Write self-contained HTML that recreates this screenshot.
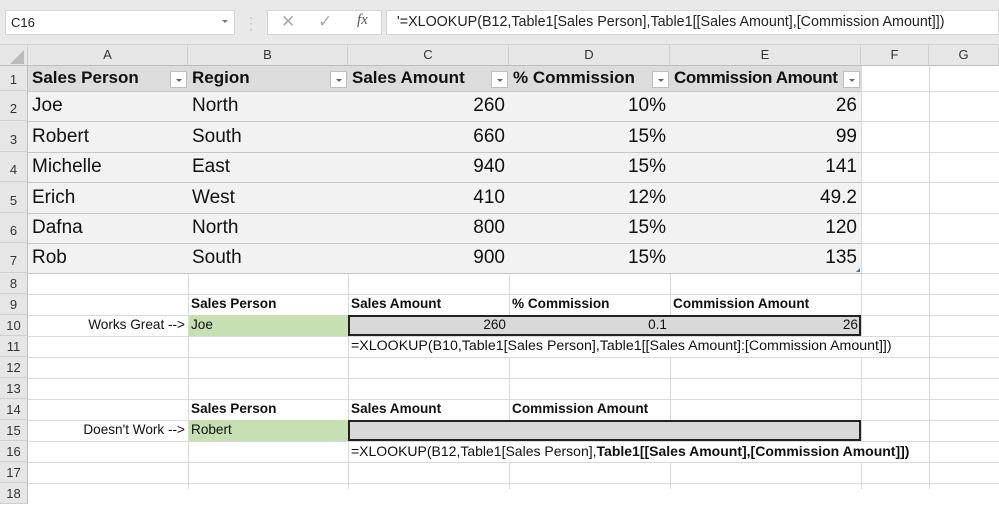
<!DOCTYPE html>
<html><head><meta charset="utf-8"><style>
*{margin:0;padding:0;box-sizing:border-box}
body{width:999px;height:489px;overflow:hidden;background:#fff;font-family:"Liberation Sans",sans-serif;position:relative}
.a{position:absolute;white-space:nowrap;overflow:visible}
.top{left:0;top:0;width:999px;height:45px;background:#e9e9e9;border-bottom:1px solid #d0d0d0}
.box{background:#fff;border:1px solid #d4d4d4}
.ch{top:45px;height:21px;background:#e6e6e6;border-right:1px solid #cfcfcf;border-bottom:1px solid #bdbdbd;font-size:13px;color:#333;text-align:center;line-height:20px}
.rh{left:0;width:28px;background:#e6e6e6;border-right:1px solid #bdbdbd;border-bottom:1px solid #cfcfcf;font-size:13px;color:#333;text-align:center}
.vl{top:66px;width:1px;height:423px;background:#dadada}
.hl{left:28px;width:971px;height:1px;background:#dadada}
.t{font-size:19px;color:#111;padding:0 4px}
.s{font-size:13.6px;color:#111;padding:0 3px}
.b{font-weight:bold}
.r{text-align:right}
.dd{position:absolute;width:17px;height:17px;background:#fff;border:1px solid #bdbdbd;top:5px}
.dd:after{content:"";position:absolute;left:5px;top:7px;border-left:3px solid transparent;border-right:3px solid transparent;border-top:3px solid #666}
</style></head><body>
<div class="a top"></div>
<div class="a box" style="left:5px;top:10px;width:230px;height:25px;font-size:13px;line-height:23px;padding-left:5px;color:#222">C16</div>
<div class="a" style="left:222px;top:20px;border-left:3px solid transparent;border-right:3px solid transparent;border-top:3px solid #777"></div>
<div class="a" style="left:249px;top:14px;color:#aaa;font-size:12px;line-height:6px">·<br>·<br>·</div>
<div class="a box" style="left:267px;top:10px;width:115px;height:25px"></div>
<div class="a" style="left:281px;top:12px;font-size:17px;color:#aaa">✕</div>
<div class="a" style="left:318px;top:12px;font-size:17px;color:#aaa">✓</div>
<div class="a" style="left:357px;top:12px;font-size:15px;color:#555;font-family:'Liberation Serif',serif;font-style:italic">fx</div>
<div class="a box" style="left:386px;top:10px;width:613px;height:25px;font-size:14.3px;line-height:23px;padding-left:10px;color:#222">'=XLOOKUP(B12,Table1[Sales Person],Table1[[Sales Amount],[Commission Amount]])</div>

<div class="a ch" style="left:0;width:28px"></div>
<div class="a" style="left:10px;top:50px;border-left:14px solid transparent;border-bottom:14px solid #bbb"></div>
<div class="a ch" style="left:28px;width:160px">A</div>
<div class="a ch" style="left:188px;width:160px">B</div>
<div class="a ch" style="left:348px;width:161px">C</div>
<div class="a ch" style="left:509px;width:161px">D</div>
<div class="a ch" style="left:670px;width:191px">E</div>
<div class="a ch" style="left:861px;width:68px">F</div>
<div class="a ch" style="left:929px;width:70px">G</div>

<div class="a vl" style="left:188px"></div><div class="a vl" style="left:348px"></div><div class="a vl" style="left:509px"></div><div class="a vl" style="left:670px"></div><div class="a vl" style="left:861px"></div><div class="a vl" style="left:929px"></div>
<div class="a hl" style="top:91px"></div><div class="a hl" style="top:121px"></div><div class="a hl" style="top:152px"></div><div class="a hl" style="top:182px"></div><div class="a hl" style="top:213px"></div><div class="a hl" style="top:243px"></div><div class="a hl" style="top:273px"></div><div class="a hl" style="top:294px"></div><div class="a hl" style="top:315px"></div><div class="a hl" style="top:336px"></div><div class="a hl" style="top:357px"></div><div class="a hl" style="top:378px"></div><div class="a hl" style="top:399px"></div><div class="a hl" style="top:420px"></div><div class="a hl" style="top:441px"></div><div class="a hl" style="top:462px"></div><div class="a hl" style="top:483px"></div>

<div class="a" style="left:28px;top:66px;width:833px;height:25px;background:#dcdcdc"></div>
<div class="a" style="left:28px;top:91px;width:833px;height:182px;background:#f2f2f2"></div>
<div class="a" style="left:28px;top:121px;width:833px;height:1px;background:#c6c6c6"></div>
<div class="a" style="left:28px;top:152px;width:833px;height:1px;background:#c6c6c6"></div>
<div class="a" style="left:28px;top:182px;width:833px;height:1px;background:#c6c6c6"></div>
<div class="a" style="left:28px;top:213px;width:833px;height:1px;background:#c6c6c6"></div>
<div class="a" style="left:28px;top:243px;width:833px;height:1px;background:#c6c6c6"></div>
<div class="a" style="left:28px;top:273px;width:833px;height:1px;background:#c6c6c6"></div>
<div class="a" style="left:28px;top:91px;width:833px;height:1px;background:#c6c6c6"></div>

<div class="a rh" style="top:66px;height:25px;line-height:28px">1</div>
<div class="a rh" style="top:91px;height:30px;line-height:36px">2</div>
<div class="a rh" style="top:121px;height:31px;line-height:37px">3</div>
<div class="a rh" style="top:152px;height:30px;line-height:36px">4</div>
<div class="a rh" style="top:182px;height:31px;line-height:37px">5</div>
<div class="a rh" style="top:213px;height:30px;line-height:36px">6</div>
<div class="a rh" style="top:243px;height:30px;line-height:36px">7</div>
<div class="a rh" style="top:273px;height:21px;line-height:22px">8</div>
<div class="a rh" style="top:294px;height:21px;line-height:22px">9</div>
<div class="a rh" style="top:315px;height:21px;line-height:22px">10</div>
<div class="a rh" style="top:336px;height:21px;line-height:22px">11</div>
<div class="a rh" style="top:357px;height:21px;line-height:22px">12</div>
<div class="a rh" style="top:378px;height:21px;line-height:22px">13</div>
<div class="a rh" style="top:399px;height:21px;line-height:22px">14</div>
<div class="a rh" style="top:420px;height:21px;line-height:22px">15</div>
<div class="a rh" style="top:441px;height:21px;line-height:22px">16</div>
<div class="a rh" style="top:462px;height:21px;line-height:22px">17</div>
<div class="a rh" style="top:483px;height:21px;line-height:22px">18</div>

<div class="a t b" style="left:28px;top:68px;width:160px;font-size:17px">Sales Person<span class="dd" style="left:142px;top:3px"></span></div>
<div class="a t b" style="left:188px;top:68px;width:160px;font-size:17px">Region<span class="dd" style="left:142px;top:3px"></span></div>
<div class="a t b" style="left:348px;top:68px;width:161px;font-size:17px">Sales Amount<span class="dd" style="left:143px;top:3px"></span></div>
<div class="a t b" style="left:509px;top:68px;width:161px;font-size:17px">% Commission<span class="dd" style="left:143px;top:3px"></span></div>
<div class="a t b" style="left:670px;top:68px;width:191px;font-size:17px;letter-spacing:-0.4px">Commission Amount<span class="dd" style="left:173px;top:3px"></span></div>

<div class="a t" style="left:28px;top:95px">Joe</div><div class="a t" style="left:188px;top:95px">North</div><div class="a t r" style="left:348px;top:95px;width:161px">260</div><div class="a t r" style="left:509px;top:95px;width:161px">10%</div><div class="a t r" style="left:670px;top:95px;width:191px">26</div>
<div class="a t" style="left:28px;top:126px">Robert</div><div class="a t" style="left:188px;top:126px">South</div><div class="a t r" style="left:348px;top:126px;width:161px">660</div><div class="a t r" style="left:509px;top:126px;width:161px">15%</div><div class="a t r" style="left:670px;top:126px;width:191px">99</div>
<div class="a t" style="left:28px;top:156px">Michelle</div><div class="a t" style="left:188px;top:156px">East</div><div class="a t r" style="left:348px;top:156px;width:161px">940</div><div class="a t r" style="left:509px;top:156px;width:161px">15%</div><div class="a t r" style="left:670px;top:156px;width:191px">141</div>
<div class="a t" style="left:28px;top:187px">Erich</div><div class="a t" style="left:188px;top:187px">West</div><div class="a t r" style="left:348px;top:187px;width:161px">410</div><div class="a t r" style="left:509px;top:187px;width:161px">12%</div><div class="a t r" style="left:670px;top:187px;width:191px">49.2</div>
<div class="a t" style="left:28px;top:217px">Dafna</div><div class="a t" style="left:188px;top:217px">North</div><div class="a t r" style="left:348px;top:217px;width:161px">800</div><div class="a t r" style="left:509px;top:217px;width:161px">15%</div><div class="a t r" style="left:670px;top:217px;width:191px">120</div>
<div class="a t" style="left:28px;top:247px">Rob</div><div class="a t" style="left:188px;top:247px">South</div><div class="a t r" style="left:348px;top:247px;width:161px">900</div><div class="a t r" style="left:509px;top:247px;width:161px">15%</div><div class="a t r" style="left:670px;top:247px;width:191px">135</div>
<div class="a" style="left:856px;top:268px;border-left:4px solid transparent;border-bottom:4px solid #4a6fa5"></div>

<div class="a s b" style="left:188px;top:296px">Sales Person</div>
<div class="a s b" style="left:348px;top:296px">Sales Amount</div>
<div class="a s b" style="left:509px;top:296px">% Commission</div>
<div class="a s b" style="left:670px;top:296px">Commission Amount</div>
<div class="a" style="left:189px;top:315px;width:159px;height:21px;background:#c6e0b4"></div>
<div class="a s r" style="left:28px;top:317px;width:160px">Works Great --&gt;</div>
<div class="a s" style="left:188px;top:317px">Joe</div>
<div class="a" style="left:348px;top:315px;width:513px;height:21px;background:#d9d9d9;border:2px solid #222"></div>
<div class="a s r" style="left:348px;top:317px;width:161px">260</div>
<div class="a s r" style="left:509px;top:317px;width:161px">0.1</div>
<div class="a s r" style="left:670px;top:317px;width:191px">26</div>
<div class="a s" style="left:349px;top:337px;height:20px;background:#fff;font-size:14.2px;line-height:19px;padding-left:2px">=XLOOKUP(B10,Table1[Sales Person],Table1[[Sales Amount]:[Commission Amount]])</div>

<div class="a s b" style="left:188px;top:401px">Sales Person</div>
<div class="a s b" style="left:348px;top:401px">Sales Amount</div>
<div class="a s b" style="left:509px;top:401px">Commission Amount</div>
<div class="a" style="left:189px;top:420px;width:159px;height:21px;background:#c6e0b4"></div>
<div class="a s r" style="left:28px;top:422px;width:160px">Doesn't Work --&gt;</div>
<div class="a s" style="left:188px;top:422px">Robert</div>
<div class="a" style="left:348px;top:420px;width:513px;height:21px;background:#d9d9d9;border:2px solid #222"></div>
<div class="a s" style="left:349px;top:442px;height:20px;background:#fff;font-size:14px;line-height:19px;padding-left:2px">=XLOOKUP(B12,Table1[Sales Person],<b>Table1[[Sales Amount],[Commission Amount]])</b></div>
</body></html>
